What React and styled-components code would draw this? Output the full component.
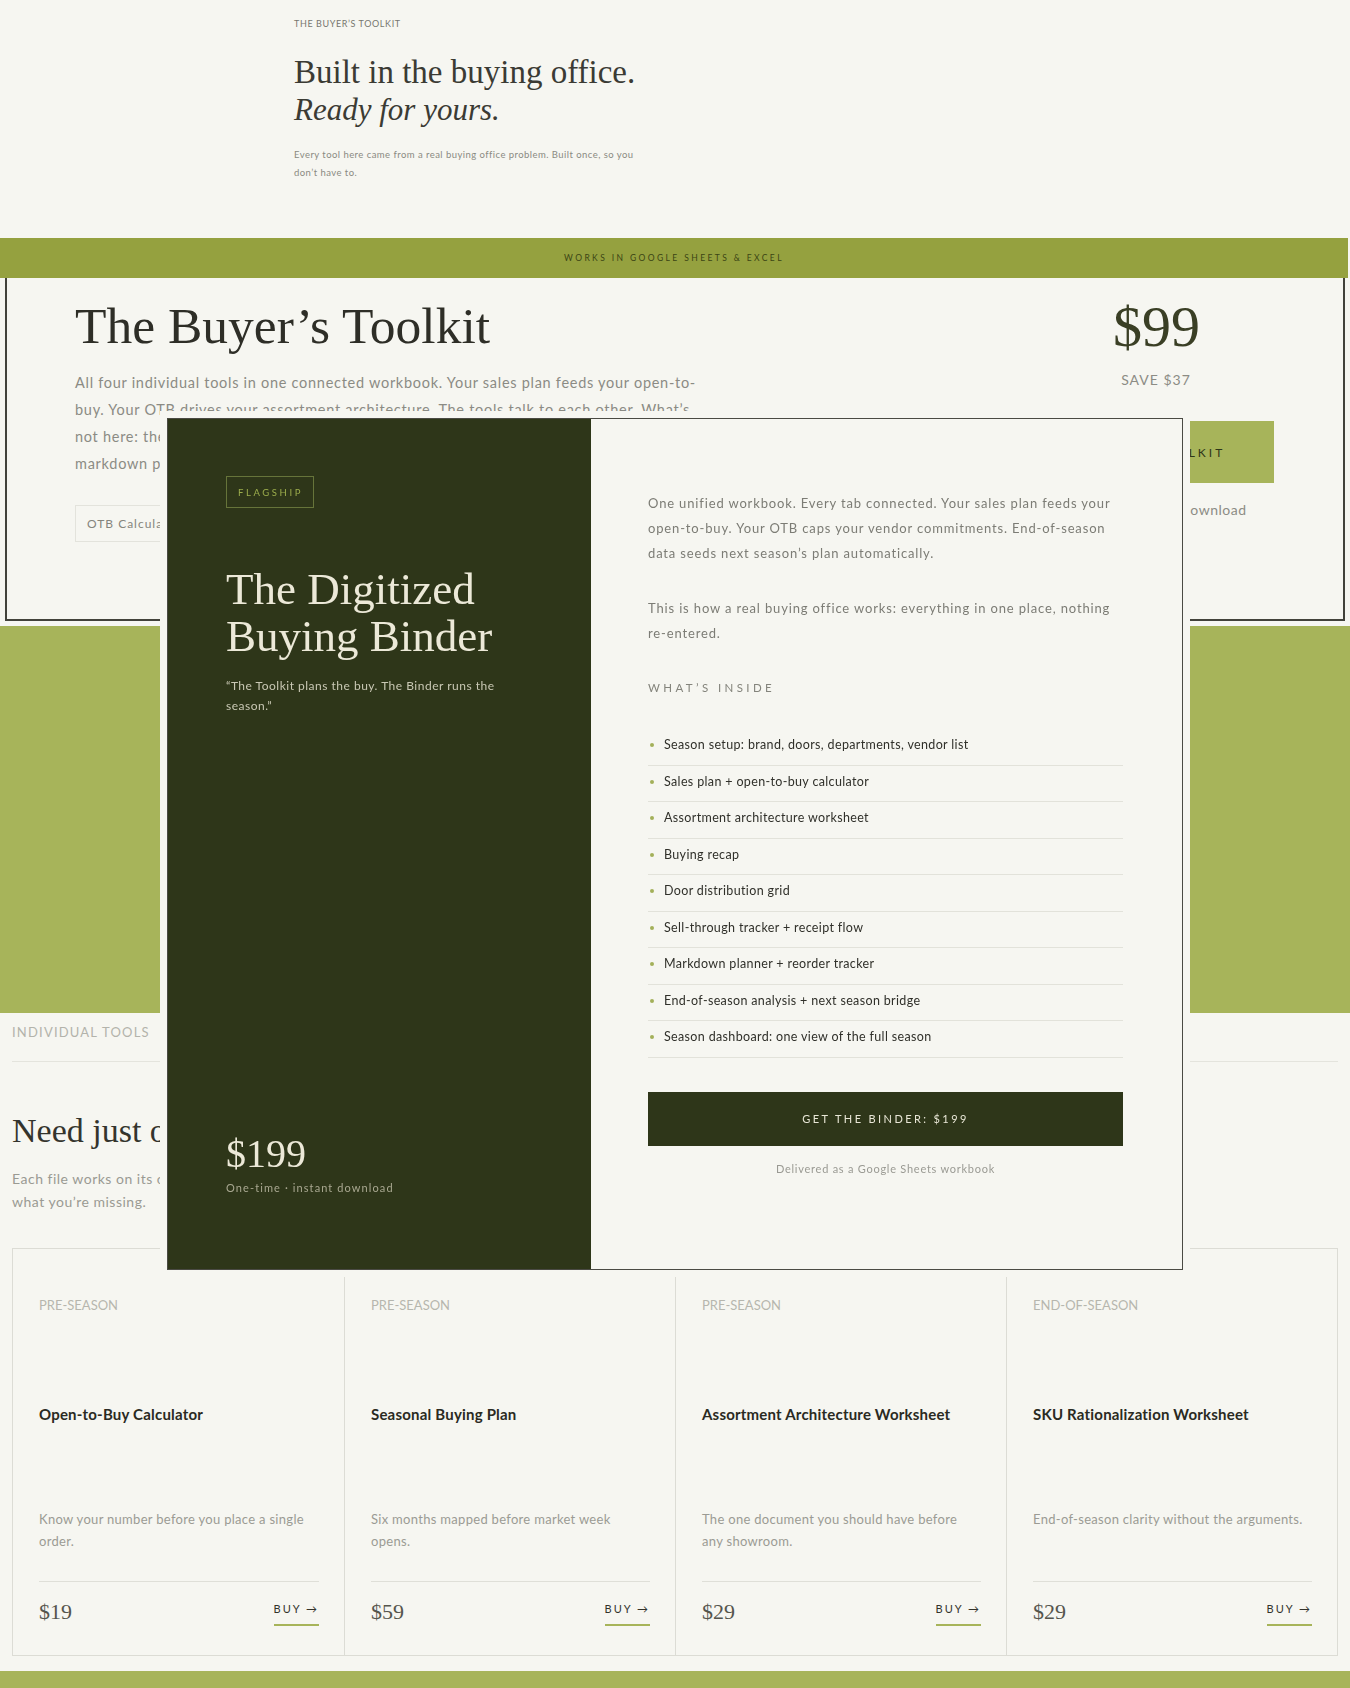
import React from "react";
import styled, { createGlobalStyle } from "styled-components";

const BG = "#f6f6f1";
const DARK = "#2e3619";
const OLIVE = "#95a13f";
const SAGE = "#a7b45a";
const SERIF = `"Liberation Serif", "Times New Roman", serif`;
const SANS = `Lato, "Noto Sans", sans-serif`;

const GlobalStyle = createGlobalStyle`
  * { box-sizing: border-box; }
  html, body { margin: 0; padding: 0; background: ${BG}; }
  body { font-family: ${SANS}; color: #2b2b24; overflow: hidden; }
`;

const Page = styled.div`
  position: relative;
  width: 1350px;
  min-height: 1688px;
  background: ${BG};
`;

/* ---------- hero ---------- */
const Hero = styled.section`
  padding: 17px 0 56px;
`;
const HeroInner = styled.div`
  width: 762px;
  margin: 0 auto;
`;
const Eyebrow = styled.div`
  font-size: 9px;
  line-height: 14px;
  letter-spacing: 0.6px;
  color: #77776f;
  text-transform: uppercase;
`;
const HeroTitle = styled.h1`
  margin: 23px 0 0;
  font-family: ${SERIF};
  font-weight: 400;
  font-size: 33px;
  line-height: 37px;
  color: #3b3b34;
  em { font-style: italic; font-size: 31px; }
`;
const HeroText = styled.p`
  margin: 18px 0 0;
  max-width: 364px;
  font-size: 9.5px;
  line-height: 18px;
  letter-spacing: 0.45px;
  color: #8a8a82;
`;

/* ---------- band ---------- */
const Band = styled.div`
  height: 40px;
  margin-right: 2px;
  background: ${OLIVE};
  display: flex;
  align-items: center;
  justify-content: center;
  font-size: 8.5px;
  letter-spacing: 2.4px;
  color: #3b4514;
  text-transform: uppercase;
`;

/* ---------- toolkit card ---------- */
const ToolkitCard = styled.section`
  margin: 0 5px;
  border: 2px solid #42423b;
  border-top: none;
  padding: 20px 69px 77px 68px;
  display: flex;
  justify-content: space-between;
  align-items: flex-start;
`;
const ToolkitMain = styled.div`
  max-width: 640px;
`;
const ToolkitTitle = styled.h2`
  margin: 0;
  font-family: ${SERIF};
  font-weight: 400;
  font-size: 51.5px;
  line-height: 55px;
  color: #2e2e27;
`;
const ToolkitText = styled.p`
  margin: 16px 0 0;
  max-width: 630px;
  font-size: 14.5px;
  line-height: 27px;
  letter-spacing: 0.72px;
  color: #8b8b84;
`;
const ChipRow = styled.div`
  margin-top: 28px;
  display: flex;
  gap: 10px;
`;
const Chip = styled.span`
  height: 37px;
  padding: 0 11px;
  display: inline-flex;
  align-items: center;
  border: 1px solid #e3e3dc;
  font-size: 12px;
  letter-spacing: 1px;
  color: #85857d;
`;
const ToolkitAside = styled.div`
  width: 244px;
  display: flex;
  flex-direction: column;
  align-items: center;
`;
const BigPrice = styled.div`
  margin-left: 9px;
  font-family: ${SERIF};
  font-size: 58px;
  line-height: 58px;
  color: #3a3f25;
`;
const Save = styled.div`
  margin: 15px 0 0 8px;
  font-size: 14px;
  line-height: 18px;
  letter-spacing: 1px;
  color: #8c8c85;
`;
const AccentButton = styled.button`
  margin-top: 32px;
  width: 100%;
  height: 62px;
  border: none;
  background: ${SAGE};
  font-family: ${SANS};
  font-size: 12px;
  letter-spacing: 3px;
  color: #2e3619;
`;
const AsideNote = styled.div`
  margin-top: 18px;
  font-size: 14px;
  line-height: 18px;
  letter-spacing: 0.5px;
  color: #8c8c85;
`;

const GreenBlock = styled.div`
  margin-top: 5px;
  height: 387px;
  background: ${SAGE};
`;

/* ---------- individual tools ---------- */
const Individual = styled.section`
  padding: 10px 12px 0;
`;
const SectionLabel = styled.div`
  font-size: 13px;
  line-height: 18px;
  letter-spacing: 1.2px;
  color: #b3b3ab;
  text-transform: uppercase;
`;
const Rule = styled.hr`
  margin: 20px 0 0;
  border: none;
  border-top: 1px solid #e4e4dd;
`;
const SectionTitle = styled.h2`
  margin: 49px 0 0;
  font-family: ${SERIF};
  font-weight: 400;
  font-size: 34px;
  line-height: 40px;
  color: #34342d;
`;
const SectionText = styled.p`
  margin: 16px 0 0;
  max-width: 640px;
  font-size: 14px;
  line-height: 23px;
  letter-spacing: 0.5px;
  color: #9a9a93;
`;
const CardGrid = styled.div`
  margin-top: 35px;
  display: grid;
  grid-template-columns: repeat(4, 1fr);
  border: 1px solid #dcdcd5;
`;
const ToolCard = styled.article`
  padding: 47px 25px 29px 26px;
  border-left: ${(p) => (p.$first ? "none" : "1px solid #dcdcd5")};
  display: flex;
  flex-direction: column;
`;
const ToolPhase = styled.div`
  font-size: 13px;
  line-height: 18px;
  color: #b6b6ae;
  text-transform: uppercase;
`;
const ToolName = styled.h3`
  margin: 90px 0 0;
  font-size: 15px;
  line-height: 20px;
  font-weight: 700;
  letter-spacing: 0.2px;
  color: #2a2a22;
`;
const ToolDesc = styled.p`
  margin: 84px 0 0;
  min-height: 44px;
  font-size: 13px;
  line-height: 22px;
  letter-spacing: 0.3px;
  color: #9b9b94;
`;
const ToolFoot = styled.div`
  margin-top: 29px;
  padding-top: 16px;
  border-top: 1px solid #dfdfd8;
  display: flex;
  justify-content: space-between;
  align-items: flex-end;
`;
const ToolPrice = styled.span`
  font-family: ${SERIF};
  font-size: 22px;
  line-height: 28px;
  color: #55554d;
`;
const BuyLink = styled.a`
  padding-bottom: 8px;
  border-bottom: 2px solid ${SAGE};
  font-size: 11px;
  line-height: 14px;
  letter-spacing: 2px;
  color: #33332b;
  text-decoration: none;
`;

const FooterBand = styled.div`
  margin-top: 15px;
  height: 17px;
  background: ${SAGE};
`;

/* ---------- modal ---------- */
const Overlay = styled.div`
  position: fixed;
  inset: 0;
  display: flex;
  align-items: center;
  justify-content: center;
`;
const Modal = styled.div`
  width: 1016px;
  height: 852px;
  border: 1px solid #4a4a43;
  box-shadow: 0 0 0 7px ${BG};
  display: grid;
  grid-template-columns: 423px 1fr;
  background: ${BG};
`;
const ModalSide = styled.div`
  background: ${DARK};
  padding: 57px 56px 73px 58px;
  display: flex;
  flex-direction: column;
  align-items: flex-start;
`;
const Badge = styled.span`
  height: 32px;
  padding: 0 10px 0 11px;
  display: inline-flex;
  align-items: center;
  border: 1px solid #66743a;
  font-size: 9.5px;
  letter-spacing: 2.6px;
  color: #9cad4c;
`;
const ModalTitle = styled.h2`
  margin: 58px 0 0;
  font-family: ${SERIF};
  font-weight: 400;
  font-size: 45px;
  line-height: 47px;
  color: #ece9d8;
`;
const Quote = styled.p`
  margin: 16px 0 0;
  max-width: 300px;
  font-size: 12px;
  line-height: 20px;
  letter-spacing: 0.5px;
  color: #c9c8b4;
`;
const SidePrice = styled.div`
  margin-top: auto;
  font-family: ${SERIF};
  font-size: 40px;
  line-height: 40px;
  color: #ece9d8;
`;
const SideCaption = styled.div`
  margin-top: 6px;
  font-size: 11px;
  line-height: 16px;
  letter-spacing: 1.1px;
  color: #a9a891;
`;
const ModalBody = styled.div`
  padding: 72px 59px 0 57px;
`;
const BodyText = styled.p`
  margin: 0 0 30px;
  font-size: 13px;
  line-height: 25px;
  letter-spacing: 0.85px;
  color: #7c7c75;
`;
const InsideLabel = styled.div`
  margin-top: 34px;
  font-size: 11.5px;
  line-height: 16px;
  letter-spacing: 3.4px;
  color: #84847c;
  text-transform: uppercase;
`;
const List = styled.ul`
  margin: 33px 0 0;
  padding: 0;
  list-style: none;
`;
const Item = styled.li`
  padding: 8px 0 11px;
  border-bottom: 1px solid #e2e2da;
  display: flex;
  align-items: center;
  font-size: 12.5px;
  line-height: 16.5px;
  letter-spacing: 0.35px;
  color: #30302a;
  &::before {
    content: "";
    width: 4px;
    height: 4px;
    border-radius: 50%;
    background: #a3b05a;
    margin: 0 10px 0 2px;
    flex: none;
  }
`;
const DarkButton = styled.button`
  margin-top: 34px;
  width: 100%;
  height: 54px;
  border: none;
  background: ${DARK};
  font-family: ${SANS};
  font-size: 11px;
  letter-spacing: 2.4px;
  color: #e8e6d6;
`;
const Delivered = styled.div`
  margin-top: 15px;
  text-align: center;
  font-size: 11px;
  line-height: 16px;
  letter-spacing: 0.75px;
  color: #9a9a93;
`;

const tools = [
  { phase: "Pre-season", name: "Open-to-Buy Calculator", desc: "Know your number before you place a single order.", price: "$19" },
  { phase: "Pre-season", name: "Seasonal Buying Plan", desc: "Six months mapped before market week opens.", price: "$59" },
  { phase: "Pre-season", name: "Assortment Architecture Worksheet", desc: "The one document you should have before any showroom.", price: "$29" },
  { phase: "End-of-season", name: "SKU Rationalization Worksheet", desc: "End-of-season clarity without the arguments.", price: "$29" },
];

const inside = [
  "Season setup: brand, doors, departments, vendor list",
  "Sales plan + open-to-buy calculator",
  "Assortment architecture worksheet",
  "Buying recap",
  "Door distribution grid",
  "Sell-through tracker + receipt flow",
  "Markdown planner + reorder tracker",
  "End-of-season analysis + next season bridge",
  "Season dashboard: one view of the full season",
];

export default function App() {
  return (
    <>
      <GlobalStyle />
      <Page>
        <Hero>
          <HeroInner>
            <Eyebrow>The Buyer’s Toolkit</Eyebrow>
            <HeroTitle>
              Built in the buying office.
              <br />
              <em>Ready for yours.</em>
            </HeroTitle>
            <HeroText>
              Every tool here came from a real buying office problem. Built once, so you don’t have to.
            </HeroText>
          </HeroInner>
        </Hero>

        <Band>Works in Google Sheets &amp; Excel</Band>

        <ToolkitCard>
          <ToolkitMain>
            <ToolkitTitle>The Buyer’s Toolkit</ToolkitTitle>
            <ToolkitText>
              All four individual tools in one connected workbook. Your sales plan feeds your open-to-buy. Your OTB
              drives your assortment architecture. The tools talk to each other. What’s not here: the season-running
              side, such as door distribution, sell-through tracking and markdown planning. That lives in the Binder.
            </ToolkitText>
            <ChipRow>
              <Chip>OTB Calculator</Chip>
              <Chip>Buying Plan</Chip>
              <Chip>Assortment</Chip>
              <Chip>SKU Review</Chip>
            </ChipRow>
          </ToolkitMain>
          <ToolkitAside>
            <BigPrice>$99</BigPrice>
            <Save>SAVE $37</Save>
            <AccentButton>GET THE TOOLKIT</AccentButton>
            <AsideNote>One-time · instant download</AsideNote>
          </ToolkitAside>
        </ToolkitCard>

        <GreenBlock />

        <Individual>
          <SectionLabel>Individual Tools</SectionLabel>
          <Rule />
          <SectionTitle>Need just one?</SectionTitle>
          <SectionText>
            Each file works on its own. Start with the one that solves today’s problem, and you’ll quickly see
            what you’re missing.
          </SectionText>
          <CardGrid>
            {tools.map((t, i) => (
              <ToolCard key={t.name} $first={i === 0}>
                <ToolPhase>{t.phase}</ToolPhase>
                <ToolName>{t.name}</ToolName>
                <ToolDesc>{t.desc}</ToolDesc>
                <ToolFoot>
                  <ToolPrice>{t.price}</ToolPrice>
                  <BuyLink href="#">BUY →</BuyLink>
                </ToolFoot>
              </ToolCard>
            ))}
          </CardGrid>
        </Individual>

        <FooterBand />

        <Overlay>
          <Modal>
            <ModalSide>
              <Badge>FLAGSHIP</Badge>
              <ModalTitle>
                The Digitized
                <br />
                Buying Binder
              </ModalTitle>
              <Quote>“The Toolkit plans the buy. The Binder runs the season.”</Quote>
              <SidePrice>$199</SidePrice>
              <SideCaption>One-time · instant download</SideCaption>
            </ModalSide>
            <ModalBody>
              <BodyText>
                One unified workbook. Every tab connected. Your sales plan feeds your open-to-buy. Your OTB caps
                your vendor commitments. End-of-season data seeds next season’s plan automatically.
              </BodyText>
              <BodyText>
                This is how a real buying office works: everything in one place, nothing re-entered.
              </BodyText>
              <InsideLabel>What’s Inside</InsideLabel>
              <List>
                {inside.map((x) => (
                  <Item key={x}>{x}</Item>
                ))}
              </List>
              <DarkButton>GET THE BINDER: $199</DarkButton>
              <Delivered>Delivered as a Google Sheets workbook</Delivered>
            </ModalBody>
          </Modal>
        </Overlay>
      </Page>
    </>
  );
}
